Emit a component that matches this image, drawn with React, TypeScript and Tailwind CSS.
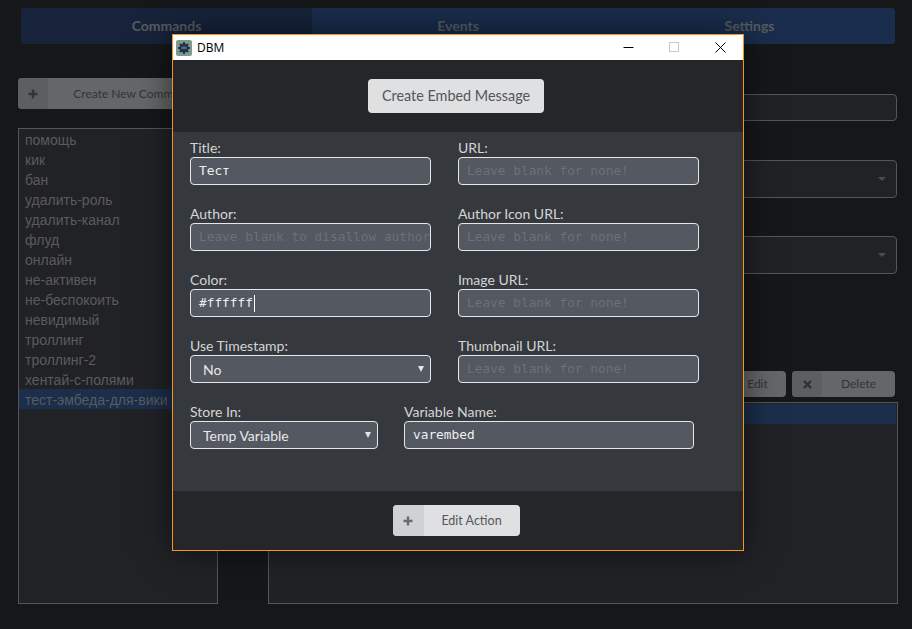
const commands = [
  "помощь",
  "кик",
  "бан",
  "удалить-роль",
  "удалить-канал",
  "флуд",
  "онлайн",
  "не-активен",
  "не-беспокоить",
  "невидимый",
  "троллинг",
  "троллинг-2",
  "хентай-с-полями",
  "тест-эмбеда-для-вики",
];

function Plus({ color }: { color: string }) {
  return (
    <svg width="10" height="10" viewBox="0 0 10 10">
      <path d="M5 0.5v9M0.5 5h9" stroke={color} strokeWidth="2.4" />
    </svg>
  );
}

function Times() {
  return (
    <svg width="9" height="9" viewBox="0 0 9 9">
      <path d="M1 1l7 7M8 1L1 8" stroke="#2f3032" strokeWidth="2.4" />
    </svg>
  );
}

function DimButton({
  icon,
  label,
  className,
}: {
  icon: React.ReactNode;
  label: string;
  className: string;
}) {
  return (
    <div className={`flex overflow-hidden rounded-[4px] bg-[#656667] text-[#333436] ${className}`}>
      <div className="flex w-[30px] shrink-0 items-center justify-center bg-[#5d5e5f]">{icon}</div>
      <div className="flex flex-1 items-center justify-center whitespace-nowrap">{label}</div>
    </div>
  );
}

function DimSelect() {
  return (
    <div className="flex h-[38px] items-center justify-end rounded-[4px] border border-[#555658] bg-[#212226] pr-[10px]">
      <div className="h-0 w-0 border-x-[4px] border-t-[4px] border-x-transparent border-t-[#4c4d50]" />
    </div>
  );
}

function Label({ children }: { children: string }) {
  return <div className="h-[18px] text-[14px] leading-[18px] text-[#d4d5d6]">{children}</div>;
}

function TextBox({
  value,
  placeholder,
  caret,
  width,
}: {
  value?: string;
  placeholder?: string;
  caret?: boolean;
  width: string;
}) {
  return (
    <div
      className={`flex h-[28px] items-center overflow-hidden whitespace-nowrap rounded-[4px] border border-[#e6e7e8] bg-[#545860] pl-[8px] font-['DejaVu_Sans_Mono',monospace] text-[12.8px] ${width} ${
        value ? "text-[#eef0f2]" : "text-[#6e7073]"
      }`}
    >
      {value ?? placeholder}
      {caret && <span className="ml-px h-[17px] w-px bg-white" />}
    </div>
  );
}

function SelectBox({ value, width }: { value: string; width: string }) {
  return (
    <div
      className={`flex h-[28px] items-center justify-between rounded-[4px] border border-[#e6e7e8] bg-[#545860] pl-[12px] pr-[6px] text-[14px] text-[#e8e9ea] ${width}`}
    >
      {value}
      <div className="h-0 w-0 border-x-[3.5px] border-t-[6px] border-x-transparent border-t-[#e4e5e6]" />
    </div>
  );
}

function Field({ label, children }: { label: string; children: React.ReactNode }) {
  return (
    <div className="flex flex-col">
      <Label>{label}</Label>
      {children}
    </div>
  );
}

function DbmIcon() {
  return (
    <svg width="16" height="16" viewBox="0 0 16 16">
      <rect width="16" height="16" rx="2" fill="#7c9a92" />
      <circle cx="8" cy="8" r="4.6" fill="#2c3038" />
      <path
        d="M8 2v12M2 8h12M3.8 3.8l8.4 8.4M12.2 3.8l-8.4 8.4"
        stroke="#2c3038"
        strokeWidth="1.8"
      />
      <rect x="5.5" y="6.5" width="5" height="2.5" fill="#3f6fc0" />
    </svg>
  );
}

function EmbedWindow() {
  return (
    <div className="absolute left-[172px] top-[34px] flex h-[517px] w-[572px] flex-col border border-[#f7931e] bg-[#25262a] font-['Lato',sans-serif] shadow-[0_0_32px_rgba(0,0,0,0.55)]">
      {/* Title bar */}
      <div className="flex h-[25px] shrink-0 items-center bg-white pl-[3px]">
        <DbmIcon />
        <span className="ml-[5px] font-['Open_Sans',sans-serif] text-[12px] text-black">DBM</span>
        <div className="ml-auto flex items-center pr-[17px]">
          <svg width="11" height="11" viewBox="0 0 11 11" className="mr-[35px]">
            <path d="M0.5 5.5h10" stroke="#000" />
          </svg>
          <svg width="11" height="11" viewBox="0 0 11 11" className="mr-[35px]">
            <rect x="0.5" y="0.5" width="9" height="9" fill="none" stroke="#c8c8c8" />
          </svg>
          <svg width="11" height="11" viewBox="0 0 11 11">
            <path d="M0.5 0.5l10 10M10.5 0.5l-10 10" stroke="#000" />
          </svg>
        </div>
      </div>

      {/* Header */}
      <div className="flex h-[72px] shrink-0 justify-center pr-[4px] pt-[19px]">
        <div className="flex h-[34px] w-[176px] items-center justify-center rounded-[4px] bg-[#dfe0e2] text-[14.4px] text-[#555659]">
          Create Embed Message
        </div>
      </div>

      {/* Form */}
      <div className="h-[359px] shrink-0 bg-[#35383d] pl-[17px] pt-[7px]">
        <div className="grid grid-cols-[241px_241px] gap-x-[27px] gap-y-[20px]">
          <Field label="Title:">
            <TextBox value="Тест" width="w-[241px]" />
          </Field>
          <Field label="URL:">
            <TextBox placeholder="Leave blank for none!" width="w-[241px]" />
          </Field>
          <Field label="Author:">
            <TextBox placeholder="Leave blank to disallow author" width="w-[241px]" />
          </Field>
          <Field label="Author Icon URL:">
            <TextBox placeholder="Leave blank for none!" width="w-[241px]" />
          </Field>
          <Field label="Color:">
            <TextBox value="#ffffff" caret width="w-[241px]" />
          </Field>
          <Field label="Image URL:">
            <TextBox placeholder="Leave blank for none!" width="w-[241px]" />
          </Field>
          <Field label="Use Timestamp:">
            <SelectBox value="No" width="w-[241px]" />
          </Field>
          <Field label="Thumbnail URL:">
            <TextBox placeholder="Leave blank for none!" width="w-[241px]" />
          </Field>
        </div>
        <div className="mt-[20px] flex gap-[26px]">
          <Field label="Store In:">
            <SelectBox value="Temp Variable" width="w-[188px]" />
          </Field>
          <Field label="Variable Name:">
            <TextBox value="varembed" width="w-[290px]" />
          </Field>
        </div>
      </div>

      {/* Footer */}
      <div className="flex flex-1 justify-center pr-[4px] pt-[14px]">
        <div className="flex h-[31px] w-[127px] overflow-hidden rounded-[4px] bg-[#dfe0e2] text-[12.5px] text-[#555659]">
          <div className="flex w-[31px] items-center justify-center bg-[#d0d1d3]">
            <Plus color="#6a6b6e" />
          </div>
          <div className="flex flex-1 items-center justify-center pt-[2px]">Edit Action</div>
        </div>
      </div>
    </div>
  );
}

export default function App() {
  return (
    <div className="relative h-[629px] w-[912px] overflow-hidden bg-[#161719] font-['Lato',sans-serif]">
      {/* Tabs */}
      <div className="ml-[21px] mt-[8px] flex h-[36px] w-[874px] overflow-hidden rounded-[3px] bg-[#1a2d4c] pb-[2px] text-[14px] font-bold text-[#595b5f]">
        <div className="-mb-[2px] flex w-[291px] items-center justify-center bg-[#16233a] pb-[2px]">Commands</div>
        <div className="flex w-[292px] items-center justify-center">Events</div>
        <div className="flex flex-1 items-center justify-center">Settings</div>
      </div>

      <div className="flex gap-[50px] pl-[18px]">
        {/* Command list */}
        <div className="flex w-[200px] flex-col gap-[19px] pt-[34px]">
          <DimButton
            icon={<Plus color="#333436" />}
            label="Create New Command"
            className="h-[31px] w-[200px] text-[12px]"
          />
          <div className="h-[476px] border border-[#555658] bg-[#212226] font-['Liberation_Sans',sans-serif] text-[14px] text-[#5a5b5d]">
            {commands.map((name, i) => (
              <div
                key={name}
                className={`h-[20px] whitespace-nowrap pl-[6px] leading-[22px] ${
                  i === commands.length - 1 ? "bg-[#1b2e4c]" : ""
                }`}
              >
                {name}
              </div>
            ))}
          </div>
        </div>

        {/* Command settings */}
        <div className="flex w-[630px] flex-col pt-[50px]">
          <div className="h-[27px] w-[629px] rounded-[4px] border border-[#555658] bg-[#212226]" />
          <div className="mt-[39px] w-[629px]">
            <DimSelect />
          </div>
          <div className="mt-[38px] w-[629px]">
            <DimSelect />
          </div>
          <div className="mt-[97px] flex justify-end gap-[6px] pr-[3px] text-[12px]">
            <DimButton icon={<Plus color="#333436" />} label="Edit" className="h-[26px] w-[87px]" />
            <DimButton icon={<Times />} label="Delete" className="h-[26px] w-[103px]" />
          </div>
          <div className="mt-[5px] h-[202px] border border-[#555658] bg-[#212226] p-px">
            <div className="h-[20px] bg-[#1b2e4c]" />
          </div>
        </div>
      </div>

      <EmbedWindow />
    </div>
  );
}
